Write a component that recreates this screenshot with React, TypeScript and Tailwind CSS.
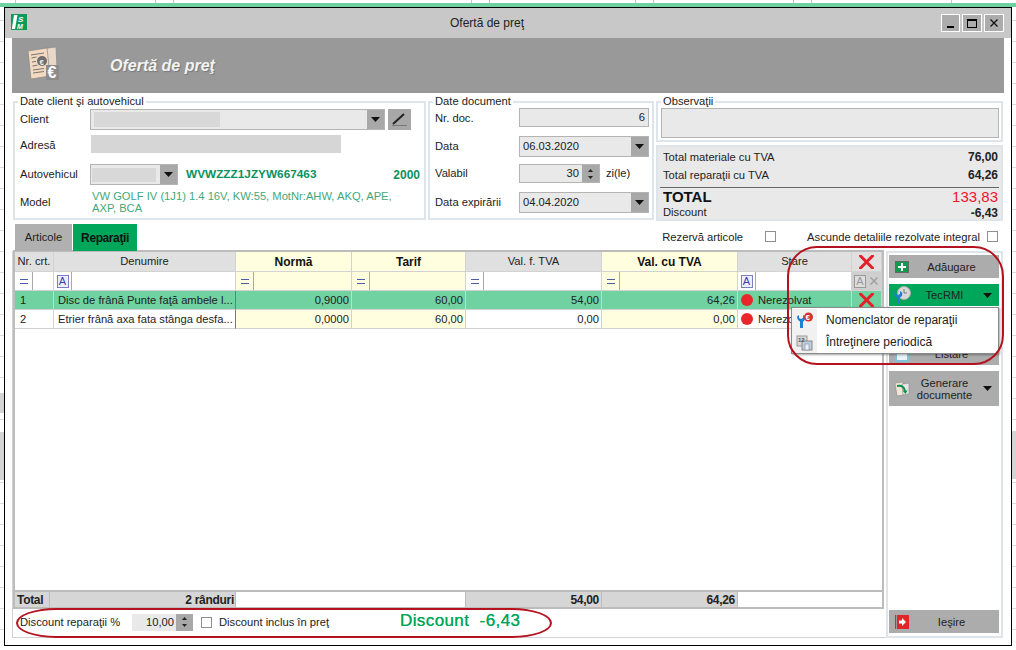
import React from "react";

const F = "font-['Liberation_Sans',Arial,sans-serif]";

function Caret({ c = "#111" }: { c?: string }) {
  return (
    <svg width="9" height="5" viewBox="0 0 9 5" className="block">
      <path d="M0 0h9L4.5 5z" fill={c} />
    </svg>
  );
}

function Combo({ w, children }: { w: string; children?: React.ReactNode }) {
  return (
    <div className={`${w} h-[21px] flex border border-[#b4b4b4] bg-[#e9e9e9] box-border items-stretch`}>
      <div className="flex-1 min-w-0 flex items-center text-[11.2px] pl-[3px] text-[#222]">{children}</div>
      <div className="w-[17px] bg-[#a8a8a8] flex items-center justify-center">
        <Caret />
      </div>
    </div>
  );
}

function Spin() {
  return (
    <div className="w-[17px] bg-[#a8a8a8] flex flex-col items-center justify-center gap-[4px]">
      <svg width="5" height="3" viewBox="0 0 5 3" className="block"><path d="M0 3h5L2.5 0z" fill="#222" /></svg>
      <svg width="5" height="3" viewBox="0 0 5 3" className="block"><path d="M0 0h5L2.5 3z" fill="#222" /></svg>
    </div>
  );
}

function Check() {
  return <span className="block w-[11px] h-[11px] border border-[#8f8f8f] bg-white shrink-0" />;
}

function FilterA({ gray }: { gray?: boolean }) {
  return (
    <span
      className={`flex items-center justify-center w-[12px] h-[13px] border text-[11px] leading-none ${
        gray ? "border-[#999] text-[#999] bg-[#ddd]" : "border-[#7a7fc0] text-[#3a43a8] bg-[#eef]"
      }`}
    >
      A
    </span>
  );
}

function RedX({ size = 15 }: { size?: number }) {
  return (
    <svg width={size} height={size - 1} viewBox="0 0 15 14" className="block">
      <path d="M1.5 1 13.5 13M13.5 1 1.5 13" stroke="#e3202a" strokeWidth="3" strokeLinecap="square" />
    </svg>
  );
}

const W = ["w-[39px]", "w-[182px]", "w-[116px]", "w-[114px]", "w-[136px]", "w-[136px]", "w-[114px]", "w-[30px]"];

function Cell({ i, className = "", children }: { i: number; className?: string; children?: React.ReactNode }) {
  return (
    <div className={`${W[i]} shrink-0 h-full box-border border-r border-b border-[#d2d2d2] flex items-center overflow-hidden whitespace-nowrap ${className}`}>
      {children}
    </div>
  );
}

function EqFilter({ i, bg }: { i: number; bg: string }) {
  return (
    <Cell i={i} className={bg}>
      <div className="w-[18px] h-full flex items-center justify-center border-r border-[#a9a9a9] shrink-0">
        <span className="block w-[8px] h-[5px] border-y border-[#4b5ea8]" />
      </div>
    </Cell>
  );
}

function AFilter({ i }: { i: number }) {
  return (
    <Cell i={i} className="bg-white">
      <div className="w-[18px] h-full flex items-center justify-center border-r border-[#a9a9a9] shrink-0">
        <FilterA />
      </div>
    </Cell>
  );
}

function DataRow({ nr, name, a, b, c, d, active }: { nr: string; name: string; a: string; b: string; c: string; d: string; active?: boolean }) {
  const base = active ? "bg-[#6fd2a0]" : "bg-white";
  const y = active ? "bg-[#6fd2a0]" : "bg-[#ffffe0]";
  const num = "justify-end pr-[2px]";
  return (
    <div className="flex h-[19px] text-[11.2px] text-[#222]">
      <Cell i={0} className={`${base} pl-[5px]`}>{nr}</Cell>
      <Cell i={1} className={`${base} pl-[4px] border-r-[#777]`}>{name}</Cell>
      <Cell i={2} className={`${y} ${num}`}>{a}</Cell>
      <Cell i={3} className={`${y} ${num}`}>{b}</Cell>
      <Cell i={4} className={`${base} ${num}`}>{c}</Cell>
      <Cell i={5} className={`${y} ${num}`}>{d}</Cell>
      <Cell i={6} className={`${base} pl-[3px] gap-[5px]`}>
        <span className="block w-[12px] h-[12px] rounded-full bg-[#e8262c] shrink-0" />
        <span>Nerezolvat</span>
      </Cell>
      <Cell i={7} className={`${base} justify-center`}>{active ? <RedX /> : null}</Cell>
    </div>
  );
}

function SideBtn({
  label, icon, caret, green, h, className = "", wide,
}: {
  label: React.ReactNode; icon?: React.ReactNode; caret?: boolean; green?: boolean; h: string; className?: string; wide?: boolean;
}) {
  return (
    <div className={`${h} ml-px mr-[2px] shrink-0 flex items-center text-[11.2px] text-[#222] ${green ? "bg-[#00a65a]" : "bg-[#acacac]"} ${className}`}>
      <div className="w-[26px] shrink-0 flex items-center justify-center">{icon}</div>
      <div className="flex-1 text-center leading-[12px]">{label}</div>
      <div className={`${wide ? "w-[25px] pl-[9px]" : "w-[11px]"} shrink-0 flex items-center justify-start`}>
        {caret ? <Caret /> : null}
      </div>
    </div>
  );
}

function DocIcon() {
  return (
    <svg width="32" height="34" viewBox="0 0 32 34" className="block">
      <path d="M13 3 29 1l1 22-14 2z" fill="#e8d8c8" stroke="#8a8a8a" strokeWidth=".7" />
      <path d="M1 5 20 2l3 28-19 3z" fill="#f3d9bf" stroke="#888" strokeWidth=".7" />
      <path d="M4 9 17 7M4.500 12l5-1M5 16l4-.6M5.500 20l5-.8M6 24l11-1.500M6 27l11-1.500" stroke="#777" strokeWidth="1" />
      <circle cx="15" cy="15" r="5" fill="#6e6e6e" />
      <rect x="19" y="19" width="13" height="15" fill="#8b8b8b" />
      <text x="20.500" y="32" fontSize="16" fontWeight="700" fill="#fff" fontFamily="Liberation Sans">€</text>
      <text x="12.500" y="18.500" fontSize="8" fontWeight="700" fill="#eee" fontFamily="Liberation Sans">€</text>
    </svg>
  );
}

function Logo() {
  return (
    <svg width="16" height="16" viewBox="0 0 16 16" className="block">
      <rect width="16" height="16" fill="#0a9a5a" />
      <path d="M3 1h3.500L4 15H.800z" fill="#fff" />
      <text x="7" y="8" fontSize="8" fontWeight="700" fontStyle="italic" fill="#fff" fontFamily="Liberation Sans">S</text>
      <text x="6" y="15" fontSize="7" fontWeight="700" fontStyle="italic" fill="#fff" fontFamily="Liberation Sans">M</text>
    </svg>
  );
}

function Wrench({ c = "#1f7fd0" }: { c?: string }) {
  return (
    <path
      d="M1 3.500 3 2v3l2 1 2-1V2l2 1.500C10 6 8.500 8 7 8.500V15H4V8.500C2.500 8 1 6 1 3.500z"
      fill={c}
    />
  );
}

export default function App() {
  const label = "text-[11.2px] text-[#222]";
  const legend = "ml-[3px] px-[2px] h-[14px] text-[11.2px] leading-[12px] text-[#222]";
  return (
    <div className={`${F} relative w-[1016px] h-[650px] overflow-hidden bg-white bg-[repeating-linear-gradient(180deg,#fff_0,#fff_20px,#dcdcdc_20px,#dcdcdc_21px)]`}>
      {/* spreadsheet behind the window */}
      <div className="flex h-[3px] bg-white">
        {["w-[16px]", "w-[140px]", "w-[18px]", "w-[298px]", "w-[18px]", "w-[146px]", "w-[18px]", "w-[140px]", "w-[18px]", "w-[140px]"].map((w, i) => (
          <div key={i} className={`${w} border-r border-[#c8c8c8] box-border`} />
        ))}
      </div>
      <div className="h-[4px] bg-[#6fd19f]" />
      <div className="absolute left-0 top-[393px] w-[4px] h-[20px] bg-[#d4d4d4]" />
      <div className="absolute left-0 top-[432px] w-[4px] h-[48px] bg-[#d4d4d4]" />
      <div className="absolute right-0 top-[431px] w-[4px] h-[48px] bg-[#d4d4d4]" />

      {/* window */}
      <div className="relative ml-[4px] w-[1008px] h-[639px] box-border border border-black bg-white flex flex-col">
        {/* title bar */}
        <div className="h-[30px] shrink-0 bg-[#c8c8c8] flex items-center">
          <div className="ml-[6px] w-[16px] -mt-[2px]"><Logo /></div>
          <div className="ml-[423px] text-[12px] text-[#222]">Ofertă de preţ</div>
          <div className="ml-auto mr-[7px] flex gap-[2px]">
            <div className="w-[19px] h-[18px] box-border border border-white bg-[#acacac] flex items-end justify-center pb-[3px]">
              <span className="block w-[7px] h-[2px] bg-black" />
            </div>
            <div className="w-[20px] h-[18px] box-border border border-white bg-[#acacac] flex items-center justify-center">
              <span className="block w-[10px] h-[9px] border border-t-2 border-black" />
            </div>
            <div className="w-[20px] h-[18px] box-border border border-white bg-[#acacac] flex items-center justify-center">
              <svg width="8" height="8" viewBox="0 0 8 8" className="block"><path d="M.5.500l7 7M7.500.500l-7 7" stroke="#111" strokeWidth="1.300" /></svg>
            </div>
          </div>
        </div>

        {/* header band */}
        <div className="h-[55px] shrink-0 mx-[7px] bg-[#999] flex items-center">
          <div className="ml-[15px] w-[83px] -mt-[6px]"><DocIcon /></div>
          <div className="text-[16px] font-bold italic text-[#f2f2f2] [text-shadow:1px_1px_1px_#777]">Ofertă de preţ</div>
        </div>

        {/* top forms */}
        <div className="mt-[2px] ml-[8px] flex h-[126px] shrink-0">
          <fieldset className="w-[413px] h-[125px] box-border border-2 border-[#dde4ea]">
            <legend className={legend}>Date client şi autovehicul</legend>
            <div className="flex items-center pl-[5px]">
              <span className={`${label} w-[70px]`}>Client</span>
              <Combo w="w-[295px]">
                <span className="block w-[126px] h-[15px] bg-[#d8d8d8]" />
              </Combo>
              <div className="ml-[3px] w-[23px] h-[21px] bg-[#a8a8a8] flex items-center justify-center">
                <svg width="17" height="15" viewBox="0 0 17 15" className="block">
                  <path d="M2 12 13 2" stroke="#222" strokeWidth="2" />
                  <path d="M1 13.500h15" stroke="#777" strokeWidth="1" />
                </svg>
              </div>
            </div>
            <div className="flex items-center pl-[5px] mt-[5px] h-[18px]">
              <span className={`${label} w-[71px] pt-[3px]`}>Adresă</span>
              <span className="block w-[250px] h-[18px] bg-[#d6d6d6]" />
            </div>
            <div className="flex items-center pl-[5px] mt-[11px] h-[21px]">
              <span className={`${label} w-[70px]`}>Autovehicul</span>
              <Combo w="w-[88px]">
                <span className="block w-[64px] h-[14px] -ml-[2px] bg-[#d8d8d8]" />
              </Combo>
              <span className="ml-[8px] text-[11.8px] font-bold text-[#0a9160] w-[180px] whitespace-nowrap">WVWZZZ1JZYW667463</span>
              <span className="ml-auto mr-[4px] text-[12px] font-bold text-[#0a9160]">2000</span>
            </div>
            <div className="flex items-center pl-[5px] mt-[4px] h-[26px]">
              <span className={`${label} w-[72px]`}>Model</span>
              <span className="text-[11.2px] leading-[12px] text-[#3fa97c] w-[310px]">VW GOLF IV (1J1) 1.4 16V, KW:55, MotNr:AHW, AKQ, APE, AXP, BCA</span>
            </div>
          </fieldset>

          <fieldset className="ml-[2px] w-[226px] h-[125px] box-border border-2 border-[#dde4ea]">
            <legend className={legend}>Date document</legend>
            <div className="flex items-center pl-[5px] -mt-[1px]">
              <span className={`${label} w-[84px] pt-px`}>Nr. doc.</span>
              <div className="w-[130px] h-[19px] box-border border border-[#b4b4b4] bg-[#e9e9e9] text-[11.2px] text-[#222] text-right pr-[3px] leading-[17px]">6</div>
            </div>
            <div className="flex items-center pl-[5px] mt-[9px]">
              <span className={`${label} w-[84px]`}>Data</span>
              <Combo w="w-[130px]">06.03.2020</Combo>
            </div>
            <div className="flex items-center pl-[5px] mt-[7px]">
              <span className={`${label} w-[84px]`}>Valabil</span>
              <div className="w-[81px] h-[19px] box-border border border-[#b4b4b4] bg-[#e9e9e9] flex text-[11.2px] text-[#222]">
                <div className="flex-1 text-right pr-[3px] leading-[17px]">30</div>
                <Spin />
              </div>
              <span className={`${label} ml-[6px]`}>zi(le)</span>
            </div>
            <div className="flex items-center pl-[5px] mt-[9px]">
              <span className={`${label} w-[84px]`}>Data expirării</span>
              <Combo w="w-[130px]">04.04.2020</Combo>
            </div>
          </fieldset>

          <div className="ml-[2px] w-[347px] flex flex-col">
            <fieldset className="h-[47px] box-border border-2 border-[#dde4ea]">
              <legend className={legend}>Observaţii</legend>
              <div className="ml-[3px] -mt-[1px] w-[338px] h-[30px] box-border border border-[#b4b4b4] bg-[#e9e9e9]" />
            </fieldset>
            <div className="mt-[3px] h-[76px] box-border border-2 border-[#dde4ea] bg-[#e9e9e9] pl-[5px] pr-[3px] text-[11.2px] text-[#222]">
              <div className="flex justify-between h-[18px] mt-[1px] items-center">
                <span>Total materiale cu TVA</span><span className="font-bold text-[12px]">76,00</span>
              </div>
              <div className="flex justify-between h-[18px] items-center">
                <span>Total reparaţii cu TVA</span><span className="font-bold text-[12px]">64,26</span>
              </div>
              <div className="h-px bg-[#666] -ml-[3px] -mr-[1px] mt-[3px]" />
              <div className="flex justify-between h-[17px] mt-[1px] items-center">
                <span className="text-[15px] font-bold text-[#111]">TOTAL</span><span className="text-[15px] text-[#f0142a]">133,83</span>
              </div>
              <div className="flex justify-between h-[13px] items-center">
                <span>Discount</span><span className="font-bold text-[12px]">-6,43</span>
              </div>
            </div>
          </div>
        </div>

        {/* tabs row */}
        <div className="h-[30px] shrink-0 flex items-end pl-[10px] relative z-10">
          <div className="w-[57px] h-[27px] bg-[#b0b0b0] flex items-center justify-center text-[11.2px] text-[#222]">Articole</div>
          <div className="ml-px w-[64px] h-[27px] bg-[#00a65a] flex items-center justify-center text-[12px] font-bold tracking-[-0.4px] text-[#111]">Reparaţii</div>
          <div className="ml-auto self-center mt-[2px] flex items-center text-[11.2px] text-[#222] mr-[13px]">
            <span>Rezervă articole</span>
            <span className="ml-[22px]"><Check /></span>
            <span className="ml-[31px]">Ascunde detaliile rezolvate integral</span>
            <span className="ml-[7px]"><Check /></span>
          </div>
        </div>

        {/* main */}
        <div className="flex ml-[7px] w-[991px] h-[387px]">
          <div className="w-[875px] h-[387px] box-border border-x border-b border-[#d2d2d2] flex flex-col">
            <div className="-mt-[1px] w-[871px] h-[359px] shrink-0 box-border border-2 border-[#bcbcbc] flex flex-col bg-white">
              {/* header */}
              <div className="flex h-[20px] text-[11.2px] text-[#222]">
                <Cell i={0} className="bg-[#e0e0e0] justify-center">Nr. crt.</Cell>
                <Cell i={1} className="bg-[#e0e0e0] justify-center">Denumire</Cell>
                <Cell i={2} className="bg-[#ffffe0] justify-center text-[12px] font-bold text-[#111]">Normă</Cell>
                <Cell i={3} className="bg-[#ffffe0] justify-center text-[12px] font-bold text-[#111]">Tarif</Cell>
                <Cell i={4} className="bg-[#e0e0e0] justify-center">Val. f. TVA</Cell>
                <Cell i={5} className="bg-[#ffffe0] justify-center text-[12px] font-bold text-[#111]">Val. cu TVA</Cell>
                <Cell i={6} className="bg-[#e0e0e0] justify-center">Stare</Cell>
                <Cell i={7} className="bg-[#e0e0e0] justify-center"><RedX /></Cell>
              </div>
              {/* filters */}
              <div className="flex h-[19px]">
                <EqFilter i={0} bg="bg-white" />
                <AFilter i={1} />
                <EqFilter i={2} bg="bg-[#ffffe0]" />
                <EqFilter i={3} bg="bg-[#ffffe0]" />
                <EqFilter i={4} bg="bg-white" />
                <EqFilter i={5} bg="bg-[#ffffe0]" />
                <AFilter i={6} />
                <Cell i={7} className="bg-[#cfcfcf]">
                  <div className="w-[16px] flex justify-center"><FilterA gray /></div>
                  <svg width="8" height="8" viewBox="0 0 8 8" className="block ml-[2px]"><path d="M.5.500l7 7M7.500.500l-7 7" stroke="#a0a0a0" strokeWidth="1.500" /></svg>
                </Cell>
              </div>
              <DataRow active nr="1" name="Disc de frână Punte faţă ambele l..." a="0,9000" b="60,00" c="54,00" d="64,26" />
              <DataRow nr="2" name="Etrier frână axa fata stânga desfa..." a="0,0000" b="60,00" c="0,00" d="0,00" />
              <div className="flex-1" />
              {/* total */}
              <div className="flex h-[15px] shrink-0 border-t-2 border-[#bcbcbc] box-content text-[12px] font-bold tracking-[-0.3px] text-[#222]">
                <div className="w-[35px] h-full bg-[#d6d6d6] border-r border-[#bbb] box-border flex items-center pl-[2px]">Total</div>
                <div className="w-[186px] h-full bg-[#d6d6d6] border-r border-[#bbb] box-border flex items-center justify-end pr-px">2 rânduri</div>
                <div className="w-[230px] h-full bg-white border-r border-[#bbb] box-border" />
                <div className="w-[136px] h-full bg-[#d6d6d6] border-r border-[#bbb] box-border flex items-center justify-end pr-[2px]">54,00</div>
                <div className="w-[136px] h-full bg-[#d6d6d6] border-r border-[#bbb] box-border flex items-center justify-end pr-[2px]">64,26</div>
                <div className="flex-1 h-full bg-white" />
              </div>
            </div>
            {/* discount row */}
            <div className="flex-1 flex items-center pl-[7px] pb-[2px] text-[11.2px] text-[#222]">
              <span className="w-[112px]">Discount reparaţii %</span>
              <div className="w-[61px] h-[17px] bg-[#e9e9e9] flex">
                <div className="flex-1 text-right pr-[2px] leading-[17px]">10,00</div>
                <Spin />
              </div>
              <span className="ml-[8px]"><Check /></span>
              <span className="ml-[7px] w-[181px]">Discount inclus în preţ</span>
              <span className="text-[17px] tracking-[0.4px] text-[#00a65a] [text-shadow:0_0_0.5px_#00a65a] whitespace-pre -mt-[2px]">Discount  -6,43</span>
            </div>
          </div>

          {/* side buttons */}
          <div className="-ml-px w-[117px] h-[387px] box-border border-2 border-[#dde4ea] flex flex-col pt-[2px] pb-[3px]">
            <SideBtn
              h="h-[23px]"
              label="Adăugare"
              icon={<span className="relative flex items-center justify-center w-[14px] h-[12px] bg-[#0f9b4f] border border-[#666]"><span className="block w-[8px] h-[2px] bg-white" /><span className="absolute w-[2px] h-[8px] bg-white" /></span>}
            />
            <SideBtn
              h="h-[22px]"
              className="mt-[6px]"
              green
              caret
              wide
              label="TecRMI"
              icon={
                <svg width="18" height="18" viewBox="0 0 18 18" className="block">
                  <circle cx="11" cy="7" r="6.500" fill="#d9d9d9" stroke="#aaa" />
                  <path d="M11 3v4h3" stroke="#777" fill="none" />
                  <g transform="translate(0,3)"><Wrench /></g>
                </svg>
              }
            />
            <SideBtn h="h-[25px]" className="mt-[6px]" label="" />
            <SideBtn
              h="h-[22px]"
              className="mt-[6px]"
              label="Listare"
              icon={<span className="block w-[14px] h-[13px] bg-[#e8f4fa] border-2 border-[#7fc2dc] mt-[3px]" />}
            />
            <SideBtn
              h="h-[35px]"
              className="mt-[6px]"
              caret
              wide
              label={<>Generare<br />documente</>}
              icon={
                <svg width="16" height="16" viewBox="0 0 16 16" className="block">
                  <path d="M1 2 9 1l1 13-7 1z" fill="#f1e6d6" stroke="#888" strokeWidth=".6" />
                  <path d="M8 3l7-1v11l-6 1z" fill="#e5e5e5" stroke="#888" strokeWidth=".6" />
                  <path d="M3 5c5-1 7 1 8 5" stroke="#0e8f4a" strokeWidth="2" fill="none" />
                  <path d="M8.500 9.500h5L11.500 13z" fill="#0e8f4a" />
                </svg>
              }
            />
            <SideBtn
              h="h-[23px]"
              className="mt-auto"
              label="Ieşire"
              icon={
                <svg width="14" height="14" viewBox="0 0 14 14" className="block">
                  <rect width="14" height="14" fill="#e3242b" />
                  <path d="M1.500 0v14" stroke="#999" />
                  <path d="M4 5.500h3V3l4 4-4 4V8.500H4z" fill="#fff" />
                </svg>
              }
            />
          </div>
        </div>

        {/* dropdown menu */}
        <div className="absolute z-20 left-[786px] top-[299px] w-[208px] h-[47px] bg-white border border-[#8a8a8a] shadow-[1px_1px_2px_rgba(0,0,0,0.35)] flex flex-col text-[12px] text-[#222]">
          <div className="flex items-center h-[22px] mt-px">
            <div className="w-[25px] h-full bg-[#f1f1f1] flex items-center justify-center shrink-0">
              <svg width="17" height="16" viewBox="0 0 17 16" className="block">
                <g transform="translate(0,1)"><Wrench /></g>
                <circle cx="12.500" cy="5" r="4.500" fill="#d3332e" />
                <text x="9.500" y="8" fontSize="8" fontWeight="700" fill="#fff" fontFamily="Liberation Sans">€</text>
              </svg>
            </div>
            <span className="ml-[9px]">Nomenclator de reparaţii</span>
          </div>
          <div className="flex items-center h-[22px]">
            <div className="w-[25px] h-full bg-[#f1f1f1] flex items-center justify-center shrink-0">
              <svg width="17" height="17" viewBox="0 0 17 17" className="block">
                <rect x="1" y="2" width="10" height="10" fill="#d8d8d8" stroke="#999" />
                <rect x="6" y="7" width="10" height="9" fill="#b9cfe0" stroke="#8a8a8a" />
                <rect x="9" y="10" width="4" height="6" fill="#eef" stroke="#8a8a8a" strokeWidth=".6" />
                <text x="2" y="8" fontSize="6" fontWeight="700" fill="#555" fontFamily="Liberation Sans">12</text>
              </svg>
            </div>
            <span className="ml-[9px]">Întreţinere periodică</span>
          </div>
        </div>

        {/* red annotation outlines */}
        <div className="absolute z-30 left-[782px] top-[238px] w-[217px] h-[119px] border-2 border-[#b5121f] rounded-[30px] pointer-events-none" />
        <div className="absolute z-30 left-[11px] top-[600px] w-[536px] h-[30px] border-2 border-[#b5121f] rounded-[40px/15px] pointer-events-none" />
      </div>
    </div>
  );
}
